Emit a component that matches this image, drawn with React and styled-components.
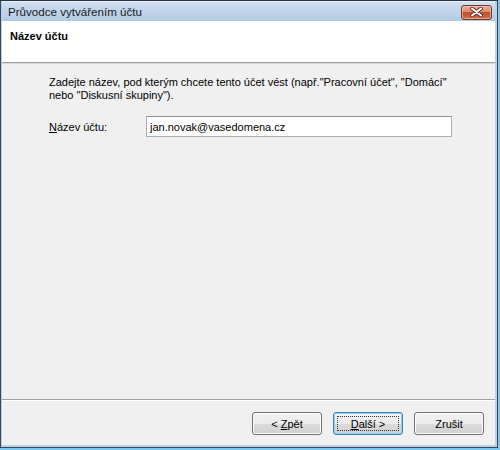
import React from "react";
import styled, { createGlobalStyle } from "styled-components";

const Global = createGlobalStyle`
  html, body { margin: 0; padding: 0; }
  body {
    width: 500px; height: 450px; overflow: hidden;
    background: #7cc7ec;
    font-family: "Liberation Sans", Arial, sans-serif;
    font-size: 11px; color: #000;
  }
`;

const Window = styled.div`
  box-sizing: border-box;
  width: 498px;
  height: 448px;
  border: 1px solid #3a4452;
  border-top-color: #2c333d;
  background: #b9d1ea;
  display: flex;
  flex-direction: column;
  padding: 0 2px 2px 1px;
`;

const TitleBar = styled.div`
  height: 20px;
  display: flex;
  align-items: center;
  justify-content: space-between;
  padding: 0 3px 0 6px;
  background: linear-gradient(#d3e1f1 0%, #c2d5ec 45%, #b3cae4 100%);
  box-shadow: inset 0 1px 0 #e8f0f9;
`;

const Title = styled.span`
  font-size: 11.6px;
  color: #1b1b1b;
  padding-top: 1px;
`;

const CloseBtn = styled.div`
  box-sizing: border-box;
  width: 31px;
  height: 15px;
  margin-top: 2px;
  border: 1px solid #6a3a2c;
  border-radius: 3px;
  background: linear-gradient(#e9ae99 0%, #d98a6c 45%, #c0502a 50%, #d2704a 100%);
  display: flex;
  align-items: center;
  justify-content: center;
  box-shadow: inset 0 0 0 1px rgba(255, 220, 200, 0.5);
`;

const Client = styled.div`
  flex: 1;
  display: flex;
  flex-direction: column;
  background: #f0f0f0;
`;

const Header = styled.div`
  height: 42px;
  background: #fff;
  padding: 9px 0 0 8px;
  box-sizing: border-box;
  border-bottom: 1px solid #a0a0a0;
  box-shadow: 0 1px 0 #d8d8d8;
`;

const HeaderTitle = styled.div`
  font-weight: bold;
  font-size: 11px;
`;

const Body = styled.div`
  flex: 1;
  padding: 13px 0 0 47px;
`;

const Intro = styled.p`
  margin: 0;
  line-height: 13px;
  white-space: nowrap;
`;

const FieldRow = styled.div`
  display: grid;
  grid-template-columns: 97px 306px;
  align-items: center;
  margin-top: 14px;
`;

const Label = styled.label`
  font-size: 11px;
`;

const U = styled.span`
  text-decoration: underline;
`;

const Input = styled.input`
  box-sizing: border-box;
  height: 21px;
  width: 306px;
  border: 1px solid #abadb3;
  border-top-color: #8e8f8f;
  background: #fff;
  font-family: "Liberation Sans", Arial, sans-serif;
  font-size: 11px;
  padding: 0 3px;
  outline: none;
`;

const Footer = styled.div`
  height: 46px;
  box-sizing: border-box;
  border-top: 1px solid #a0a0a0;
  box-shadow: inset 0 1px 0 #ffffff;
  display: flex;
  justify-content: flex-end;
  align-items: flex-start;
  gap: 11px;
  padding: 12px 11px 0 0;
`;

const Button = styled.button`
  box-sizing: border-box;
  width: 70px;
  height: 23px;
  border: 1px solid ${(p) => (p.$default ? "#3c7fb1" : "#707070")};
  border-radius: 3px;
  background: linear-gradient(#f2f2f2 0%, #ebebeb 50%, #dddddd 50%, #cfcfcf 100%);
  box-shadow: inset 0 0 0 1px ${(p) => (p.$default ? "#8fd3f2" : "#fcfcfc")};
  font-family: "Liberation Sans", Arial, sans-serif;
  font-size: 11px;
  color: #000;
  padding: 0;
  position: relative;
  ${(p) =>
    p.$default &&
    `&::after {
      content: "";
      position: absolute;
      inset: 3px;
      border: 1px dotted #333;
    }`}
`;

export default function App() {
  return (
    <>
      <Global />
      <Window>
        <TitleBar>
          <Title>Průvodce vytvářením účtu</Title>
          <CloseBtn>
            <svg width="13" height="10" viewBox="0 0 13 10">
              <path
                d="M2 1.5 L11 8.5 M11 1.5 L2 8.5"
                stroke="#5a2a1c"
                strokeWidth="3.6"
                strokeLinecap="round"
              />
              <path
                d="M2 1.5 L11 8.5 M11 1.5 L2 8.5"
                stroke="#ffffff"
                strokeWidth="2"
                strokeLinecap="round"
              />
            </svg>
          </CloseBtn>
        </TitleBar>
        <Client>
          <Header>
            <HeaderTitle>Název účtu</HeaderTitle>
          </Header>
          <Body>
            <Intro>
              Zadejte název, pod kterým chcete tento účet vést (např."Pracovní účet", "Domácí"
              <br />
              nebo "Diskusní skupiny").
            </Intro>
            <FieldRow>
              <Label htmlFor="acc">
                <U>N</U>ázev účtu:
              </Label>
              <Input id="acc" defaultValue="jan.novak@vasedomena.cz" />
            </FieldRow>
          </Body>
          <Footer>
            <Button>
              &lt; <U>Z</U>pět
            </Button>
            <Button $default>
              <U>D</U>alší &gt;
            </Button>
            <Button>Zrušit</Button>
          </Footer>
        </Client>
      </Window>
    </>
  );
}
